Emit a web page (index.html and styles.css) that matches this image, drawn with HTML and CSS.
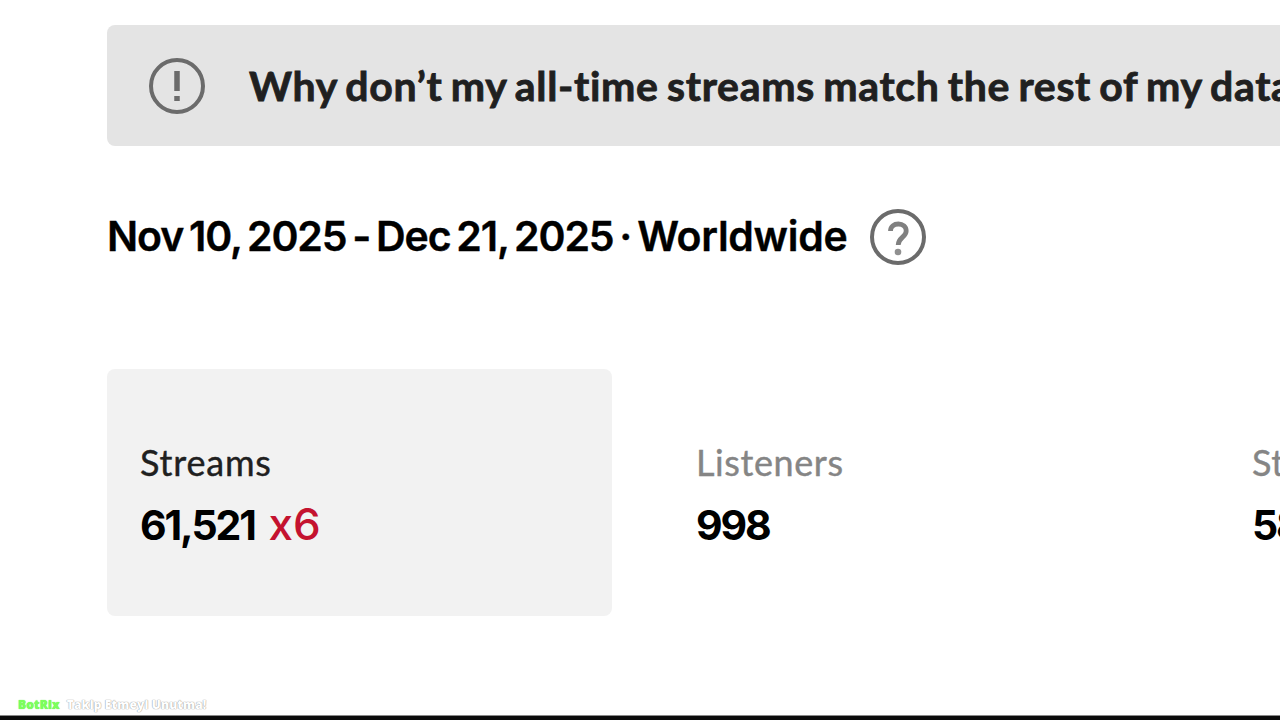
FILE: index.html
```
<!DOCTYPE html>
<html lang="en">
<head>
    <meta charset="UTF-8">
    <meta name="viewport" content="width=device-width, initial-scale=1.0">
    <title>Streams</title>
    <link rel="stylesheet" href="styles.css">
</head>
<body>
    <div class="banner">
        <svg class="icon" viewBox="0 0 56 56">
            <circle cx="28" cy="28" r="26" />
            <path class="mark" d="M28 13v20M28 38v5" />
        </svg>
        <span class="banner-text">Why don’t my all-time streams match the rest of my data</span>
    </div>

    <div class="period">
        <h1>Nov 10, 2025 - Dec 21, 2025 · <span class="region">Worldwide</span></h1>
        <svg class="icon" viewBox="0 0 56 56">
            <circle cx="28" cy="28" r="26" />
            <path class="question" d="M20.500 22c0-4.500 3.500-7 7.900-7s7.800 2.800 7.800 7c0 6-8 6.500-8 14" />
            <circle class="dot" cx="28" cy="43" r="3.300" />
        </svg>
    </div>

    <div class="stats">
        <div class="stat active">
            <div class="label">Streams</div>
            <div class="value">61,521 <span class="times">x6</span></div>
        </div>
        <div class="stat">
            <div class="label">Listeners</div>
            <div class="value">998</div>
        </div>
        <div class="stat">
            <div class="label">St</div>
            <div class="value">58</div>
        </div>
    </div>

    <div class="footer">
        <span class="bot">BotRix</span>
        <span>Takip Etmeyi Unutma!</span>
    </div>
</body>
</html>
```

FILE: styles.css
```
* {
    box-sizing: border-box;
}
body {
    margin: 0;
    width: 1280px;
    height: 720px;
    padding: 25px 0 0 107px;
    overflow: hidden;
    display: flex;
    flex-direction: column;
    background: #fff;
    color: #000;
    font-family: Inter, "Liberation Sans", sans-serif;
    white-space: nowrap;
}
.banner {
    display: flex;
    align-items: center;
    gap: 44px;
    height: 121px;
    padding-left: 42px;
    overflow: hidden;
    background: #e4e4e4;
    border-radius: 8px 0 0 8px;
}
.banner-text {
    font: bold 41px/50px Lato, sans-serif;
    font-variant-ligatures: none;
    letter-spacing: 0.7px;
    word-spacing: -2.4px;
    color: #202020;
    -webkit-text-stroke: 0.8px #202020;
}
.icon {
    flex: none;
    width: 56px;
    height: 56px;
    fill: none;
    stroke: #6b6b6b;
    stroke-width: 4;
}
.mark {
    stroke-width: 5.5;
}
.question {
    stroke: #808080;
    stroke-width: 4.8;
}
.icon .dot {
    fill: #909090;
    stroke: none;
}
.period {
    display: flex;
    align-items: center;
    gap: 23px;
    height: 60px;
    margin-top: 61px;
}
h1 {
    margin: -2px 0 0;
    font-size: 41px;
    font-weight: 600;
    line-height: 50px;
    letter-spacing: -1.1px;
    word-spacing: -3.4px;
    -webkit-text-stroke: 0.4px;
}
.region {
    letter-spacing: -0.3px;
}
.stats {
    display: grid;
    grid-template-columns: 505px 505px 61px;
    gap: 51px;
    margin-top: 102px;
}
.stat {
    height: 247px;
    padding: 71px 0 0 33px;
    overflow: hidden;
    border-radius: 8px;
}
.stat.active {
    background: #f2f2f2;
}
.label {
    font: 36px/44px Lato, sans-serif;
    letter-spacing: 0.6px;
    color: #858585;
    -webkit-text-stroke: 0.4px;
}
.active .label {
    letter-spacing: 0.8px;
    color: #202020;
}
.value {
    margin-top: 14px;
    font-size: 41px;
    font-weight: 700;
    line-height: 54px;
    letter-spacing: -2.1px;
}
.times {
    margin-left: 6px;
    font-size: 44px;
    font-weight: 500;
    line-height: 44px;
    letter-spacing: 0;
    color: #c4122f;
}
.footer {
    display: flex;
    align-items: center;
    gap: 7px;
    height: 26px;
    margin: auto 0 0 -107px;
    padding-left: 18px;
    border-bottom: 4px solid #0b0b0b;
    box-shadow: inset 0 -1px #888;
    font: 800 12px/14px "Open Sans", sans-serif;
    letter-spacing: 0.15px;
    color: #fff;
    text-shadow: 0 0 1px #999, 0 0 1px #999;
}
.bot {
    color: #7dff5c;
    text-shadow: 0 0 1px #4fe83a;
}
```
